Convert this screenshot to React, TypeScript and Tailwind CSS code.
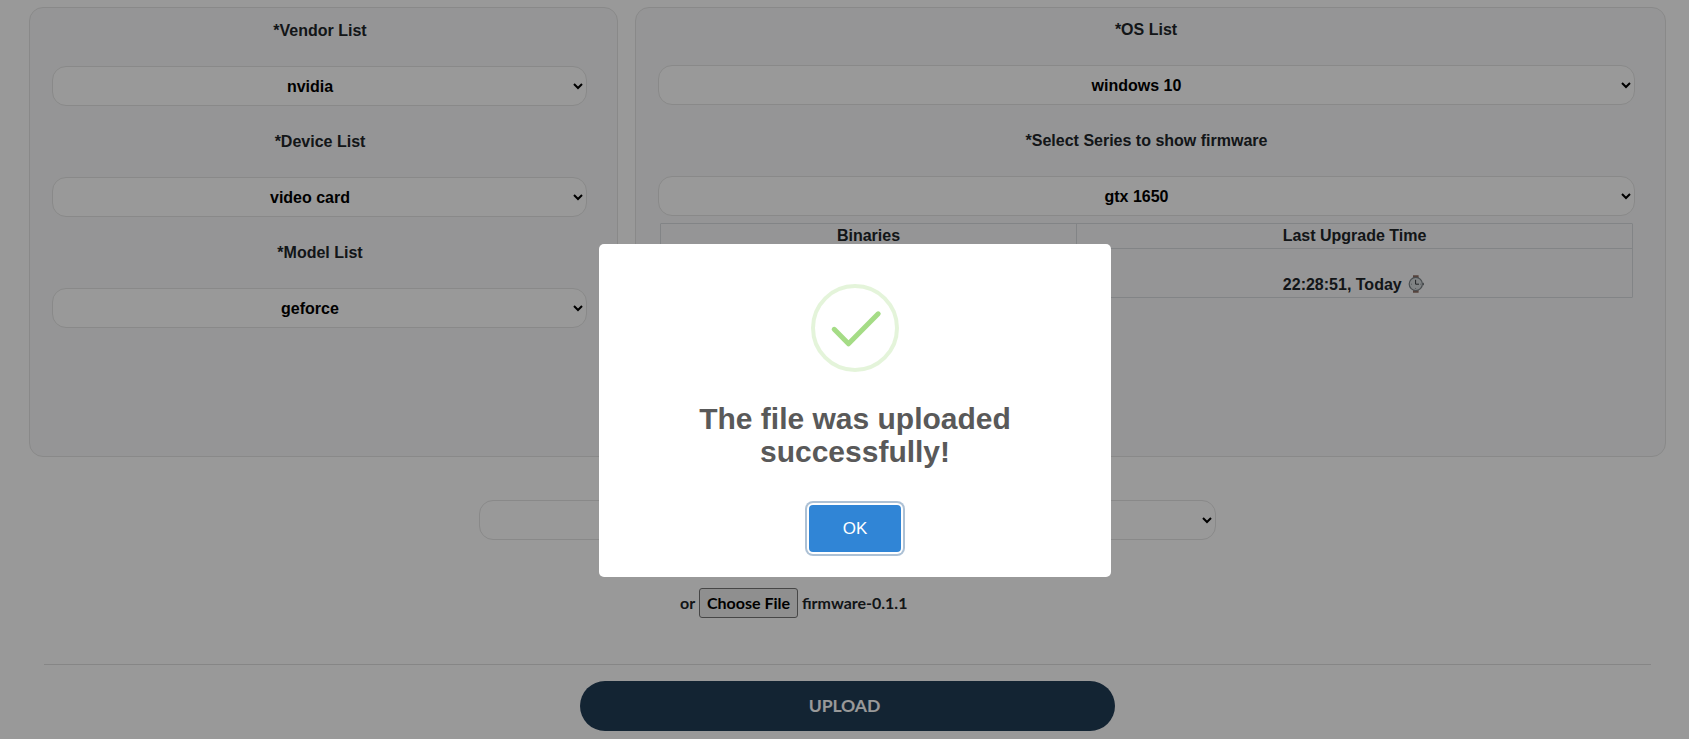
import React from "react";

function SelectBox({ value, className = "" }: { value: string; className?: string }) {
  return (
    <select
      defaultValue={value}
      className={`block h-10 rounded-[14px] border border-[#e5e5e5] bg-white text-center text-base font-bold text-black ${className}`}
    >
      <option value={value}>{value}</option>
    </select>
  );
}

interface FieldProps {
  label: string;
  value: string;
  labelClass: string;
  selectClass: string;
}

function Field({ label, value, labelClass, selectClass }: FieldProps) {
  return (
    <div className="h-[111px]">
      <div className={`text-center text-base font-bold ${labelClass}`}>{label}</div>
      <SelectBox value={value} className={`mt-[23px] w-full ${selectClass}`} />
    </div>
  );
}

function WatchIcon() {
  return (
    <svg className="inline-block h-[18px] w-5 align-[-3px]" viewBox="0 0 20 18" fill="none">
      <path d="M7 0.2h5.600v3H7z M7 14.800h5.600v3H7z" fill="#8f6f64" />
      <rect x="16.400" y="7.700" width="1.600" height="2.600" rx="0.500" fill="#777d80" />
      <circle cx="9.800" cy="9" r="6.600" fill="#d5dadd" stroke="#7c8286" strokeWidth="1.200" />
      <path d="M9.600 4.800V9.200H13" stroke="#3a3d40" strokeWidth="1" />
      <path d="M9.600 13v1M5 9.200h1M14 9.200h0.800" stroke="#82888c" strokeWidth="0.800" />
    </svg>
  );
}

function SuccessDialog() {
  return (
    <div className="fixed inset-0 flex justify-center bg-black/40 pt-[244px]">
      <div className="ml-[21px] flex h-[333px] w-[512px] flex-col items-center rounded-[5px] bg-white">
        <svg className="mt-10 h-[88px] w-[88px]" viewBox="0 0 88 88" fill="none">
          <circle cx="44" cy="44" r="42" stroke="#a5dc86" strokeOpacity="0.3" strokeWidth="4" />
          <path
            d="M23.2 45.3 L37.5 59.8 L67.2 29.8"
            stroke="#a5dc86"
            strokeWidth="5"
            strokeLinecap="round"
            strokeLinejoin="round"
          />
        </svg>
        <h2 className="mt-[30px] w-[400px] text-center text-[30px] font-bold leading-[33px] text-[#595959]">
          The file was uploaded successfully!
        </h2>
        <button className="mt-[37px] h-[47px] w-[92px] rounded bg-[#3085d6] text-[17px] text-white shadow-[0_0_0_2px_#fff,0_0_0_4px_rgba(50,100,150,0.4)]">
          OK
        </button>
      </div>
    </div>
  );
}

export default function App() {
  return (
    <div className="h-[739px] overflow-hidden bg-white font-['Liberation_Sans',sans-serif] text-[#212529]">
      <div className="flex gap-[17px] pl-[29px] pt-[7px]">
        <section className="h-[450px] w-[589px] rounded-[14px] border border-[#e5e5e5] bg-[#f8f9fa] pl-[22px] pr-[30px] pt-[11px]">
          <Field label="*Vendor List" value="nvidia" labelClass="pl-px" selectClass="pr-[7px]" />
          <Field label="*Device List" value="video card" labelClass="pl-px" selectClass="pr-[7px]" />
          <Field label="*Model List" value="geforce" labelClass="pl-px" selectClass="pr-[7px]" />
        </section>
        <section className="h-[450px] w-[1031px] rounded-[14px] border border-[#e5e5e5] bg-[#f8f9fa] pl-[22px] pr-[30px] pt-[10px]">
          <Field label="*OS List" value="windows 10" labelClass="pr-px" selectClass="pr-2" />
          <Field label="*Select Series to show firmware" value="gtx 1650" labelClass="" selectClass="pr-2" />
          <div className="-mt-[17px] ml-[2px] grid w-[973px] grid-cols-[416px_1fr] rounded-[1px] border border-[#d9dcdf] text-center text-base font-bold">
            <div className="border-r border-b border-[#d9dcdf]">Binaries</div>
            <div className="border-b border-[#d9dcdf]">Last Upgrade Time</div>
            <div className="h-12 border-r border-[#d9dcdf]" />
            <div className="h-12 pt-6">
              22:28:51, Today <WatchIcon />
            </div>
          </div>
        </section>
      </div>

      <SelectBox value="" className="ml-[479px] mt-[43px] w-[737px]" />

      <div className="ml-[680px] mt-12 flex h-[30px] items-center font-['Lato',sans-serif] text-base font-bold">
        <span className="w-[19px]">or</span>
        <button className="h-[30px] w-[99px] rounded-[3px] border border-[#767676] bg-[#efefef] text-black">
          Choose File
        </button>
        <span className="ml-1">firmware-0.1.1</span>
      </div>

      <hr className="ml-[44px] mt-[46px] w-[1607px] border-[#e0e0e0]" />

      <button className="ml-[580px] mt-4 block h-[50px] w-[535px] rounded-full bg-[#213c56] pr-[6px] pt-px font-['Lato',sans-serif] text-[17.6px] font-bold tracking-[-0.1px] text-white">
        UPLOAD
      </button>

      <SuccessDialog />
    </div>
  );
}
